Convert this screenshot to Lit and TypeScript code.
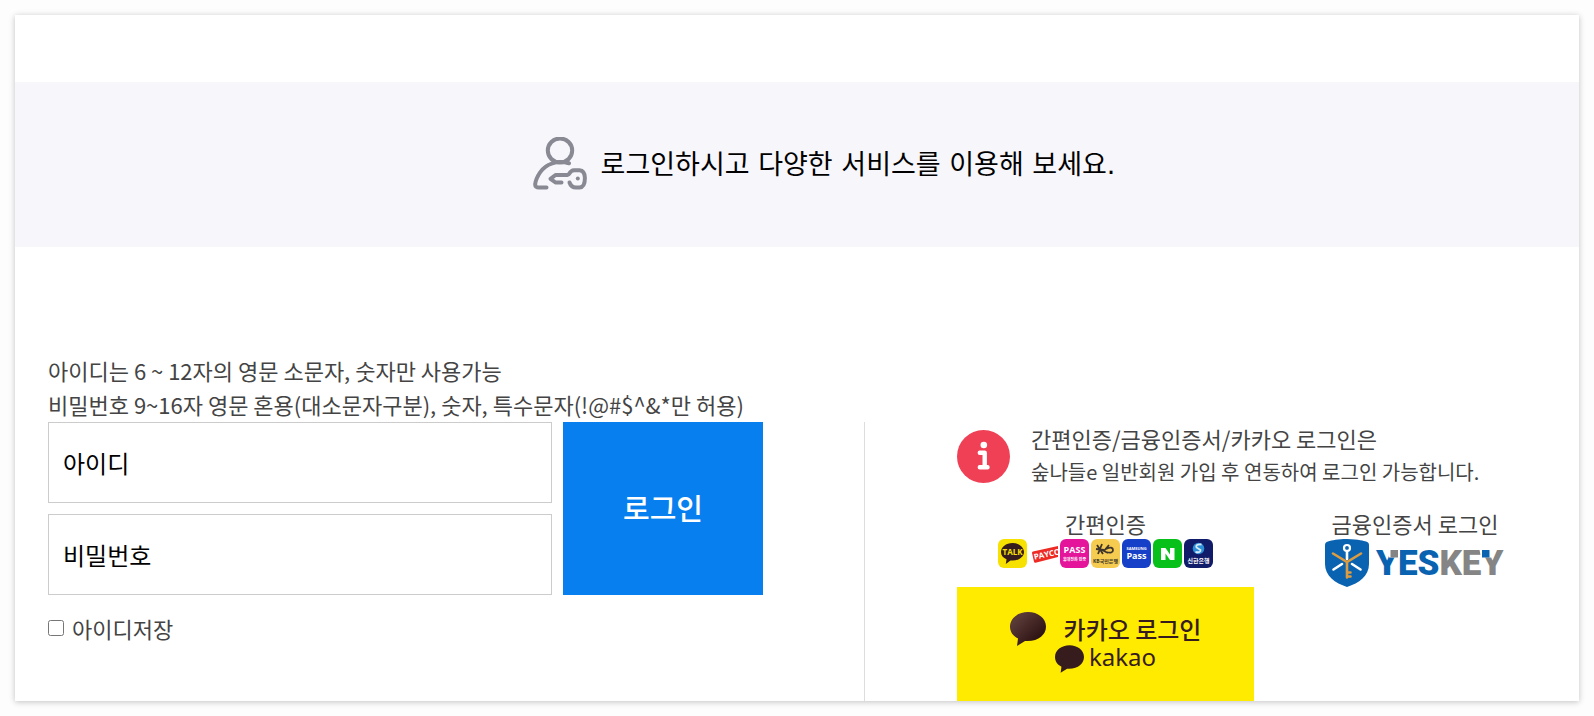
import { LitElement, html, css, svg } from "lit";
import { customElement } from "lit/decorators.js";

const memberIcon = html`<svg class="member" viewBox="0 2 54 54" width="54" height="54" aria-hidden="true" fill="none" stroke="#888993" stroke-width="4" stroke-linecap="round" stroke-linejoin="round">
  <ellipse cx="27" cy="15.500" rx="12.200" ry="12"/>
  <path d="M36 28.300C24 25 13 28.500 7 37.500C4 42 2.500 46.500 2.200 49C2 51.500 3.500 52.500 6 52.500H13.500"/>
  <path d="M28.500 47.500H22.500L17.500 43.800L22.500 40H34.500C37 40 36 35.500 41 35.200H46.500C50.500 35.500 51.800 38.500 51.900 43C51.900 48 51 52.300 46.500 52.500H43C39.500 52.500 37.500 50.500 36.500 47.500"/>
  <circle cx="44.800" cy="43.500" r="2" fill="#888993" stroke="none"/>
</svg>`;

const infoIcon = html`<svg class="info-icon" viewBox="0 0 53 53" width="53" height="53" aria-hidden="true">
  <circle cx="26.500" cy="26.500" r="26.500" fill="#ef4056"/>
  <circle cx="26.800" cy="15" r="3.300" fill="#fff"/>
  <path d="M22.800 22.800H27.700V37.200M22.800 37.200H30.500" fill="none" stroke="#fff" stroke-width="4.400" stroke-linecap="round" stroke-linejoin="round"/>
</svg>`;

const tile = (fill: string, content: unknown) => html`<svg viewBox="0 0 29 29" width="29" height="29" aria-hidden="true">
  ${svg`<rect width="29" height="29" rx="6" fill=${fill}/>`}${content}
</svg>`;

const providers = [
  tile("#f7e100", svg`<path d="M14.500 4C8 4 3 8 3 13C3 16.500 5.200 19 8.500 20.200L7.800 25L12.500 21.500C20.500 22.300 26 18 26 13C26 8 21 4 14.500 4Z" fill="#371c1d"/><text class="mark" x="14.500" y="16" font-size="8" fill="#f7e100">TALK</text>`),
  html`<svg viewBox="0 0 29 29" width="29" height="29" aria-hidden="true"><path d="M4 12.500L29 7V18L6.500 23.800Q5.300 24 5 22.800L3 14Q2.900 12.800 4 12.500Z" fill="#ee2a24"/><text class="mark" x="18" y="18" font-size="8" fill="#fff" transform="rotate(-12 18 15)">PAYCO</text></svg>`,
  tile("#e4159b", svg`<text class="mark" x="14.500" y="14" font-size="9" fill="#fff">PASS</text><text class="mark" x="14.500" y="22" font-size="4" fill="#fff">휴대전화 인증</text>`),
  tile("#f5cb50", svg`<path d="M5 10L13 11M11 5L7 15M6 6L12 15M18 6L13 12L17 14M15 10Q22 7 22 11Q22 15 15 13" fill="none" stroke="#40352a" stroke-width="1.800"/><text class="mark" x="14.500" y="24" font-size="5" fill="#40352a">KB국민은행</text>`),
  tile("#1740c8", svg`<text class="mark" x="14.500" y="11" font-size="4" fill="#fff">SAMSUNG</text><text class="mark" x="14.500" y="20" font-size="9" fill="#fff">Pass</text>`),
  tile("#08c01a", svg`<path d="M8 9H12.500L17 15.500V9H21.500V21H17L12.500 14.500V21H8Z" fill="#fff"/>`),
  tile("#101b69", svg`<circle cx="14.500" cy="9.500" r="5.800" fill="#2d8ed8"/><path d="M17.500 5.500Q11 5 12.500 8.500L16.500 11Q17 14 11.500 13" fill="none" stroke="#d7ecf8" stroke-width="1.800"/><text class="mark" x="14.500" y="24" font-size="6" fill="#fff">신한은행</text>`),
];

const yeskeyLogo = html`<svg viewBox="0 0 180 48" width="180" height="48" role="img" aria-label="YESKEY">
  <path d="M22 0C34 .3 39 2 41 2.500Q44 3.300 44 6V25C44 37 34 44 22 48C10 44 0 37 0 25V6Q0 3.300 3 2.500C7 1.200 13 .2 22 0Z" fill="#0a63b0"/>
  <path d="M22 12V20M8.500 30.500L17 25M35.500 30.500L27 25" stroke="#fff" stroke-width="2.600" stroke-linecap="round"/>
  <circle cx="22" cy="9" r="3" fill="none" stroke="#fff" stroke-width="2.200"/>
  <path d="M8 14.500L22 23L36 14.500M22 23V38.500M23 33.500H25.500M23 37.500H25.500" fill="none" stroke="#dd9c40" stroke-width="2.600" stroke-linecap="round"/>
  <text class="wordmark" x="51" y="36"><tspan fill="#0a63b0">YES</tspan><tspan fill="#858585">KEY</tspan></text>
  <path d="M64 8H75V18.500H64Z" fill="#fff"/><path d="M65.500 11H73V18.500H65.500Z" fill="#858585"/>
  <path d="M154 8H165.500L167 18.500H156Z" fill="#fff"/><path d="M157 11H164.500V18.500H157Z" fill="#0a63b0"/>
</svg>`;

const bubblePath = "M18 0C8 0 0 6.300 0 14.500C0 20 3 24 8 26.500L7 34L15 29C28 30 36 23 36 14.500C36 6.300 28 0 18 0Z";

@customElement("app-root")
export class AppRoot extends LitElement {
  static styles = css`
    :host {
      display: block;
      padding: 15px;
      background: #fdfdfd;
      color: #444;
      font: 22px/34px "Noto Sans CJK KR", sans-serif;
    }
    * { box-sizing: border-box; }
    svg { display: block; flex: none; }
    p { margin: 0; }
    a { color: inherit; text-decoration: none; }
    button, input { font-family: inherit; }
    .card {
      padding-top: 67px;
      background: #fff;
      box-shadow: 0 1px 6px rgba(0, 0, 0, 0.24);
    }
    .banner {
      display: flex;
      align-items: center;
      justify-content: center;
      gap: 14px;
      min-height: 165px;
      padding-left: 54px;
      background: #f6f6fb;
      color: #000;
    }
    .member { margin-bottom: 2px; }
    .banner h1 {
      margin: 0;
      font: 400 27px/40px "DejaVu Sans", "Noto Sans CJK KR", sans-serif;
    }
    .hints { padding: 106px 33px 1px; }
    .columns {
      display: grid;
      grid-template-columns: 849fr 715fr;
    }
    .account { padding: 0 101px 0 33px; }
    .fields {
      display: grid;
      grid-template-columns: 1fr 200px;
      gap: 11px;
    }
    .field {
      width: 100%;
      height: 81px;
      padding: 0 14px;
      border: 1px solid #ccc;
      border-radius: 0;
      background: #fff;
      font-size: 24px;
    }
    .field::placeholder { color: #000; opacity: 1; }
    .submit {
      grid-column: 2;
      grid-row: 1 / 3;
      padding: 0 0 4px;
      border: 0;
      background: #087fef;
      color: #fff;
      font-size: 29px;
      font-weight: 500;
    }
    .remember {
      display: flex;
      align-items: center;
      gap: 8px;
      margin-top: 16px;
    }
    .remember input { width: 16px; height: 16px; margin: 0; }
    .partners {
      padding: 0 25px 0 92px;
      border-left: 1px solid #ddd;
    }
    .notice {
      display: flex;
      gap: 21px;
      padding-bottom: 21px;
      line-height: 32px;
    }
    .info-icon { margin-top: 8px; }
    .small { font-size: 20px; line-height: 36px; }
    .options {
      display: grid;
      grid-template-columns: 297fr 278fr;
      column-gap: 22px;
    }
    .option {
      display: flex;
      flex-direction: column;
      align-items: center;
      gap: 4px;
      line-height: 24px;
    }
    .providers { display: flex; gap: 2px; }
    .mark {
      font-family: "Open Sans", "Noto Sans CJK KR", sans-serif;
      font-weight: 700;
      text-anchor: middle;
    }
    .wordmark { font: 900 35px Roboto, sans-serif; }
    .kakao {
      display: flex;
      flex-direction: column;
      align-items: center;
      min-height: 114px;
      padding-top: 25px;
      background: #ffeb00;
      color: #371c1d;
      font-size: 24px;
      font-weight: 500;
    }
    .kakao-row { display: flex; gap: 18px; height: 33px; line-height: 33px; }
    .kakao-brand {
      display: flex;
      gap: 5px;
      font: 24px/24px "Noto Sans", sans-serif;
    }
  `;

  render() {
    return html`
      <main class="card">
        <header class="banner">
          ${memberIcon}
          <h1>로그인하시고 다양한 서비스를 이용해 보세요.</h1>
        </header>
        <div class="hints">
          <p>아이디는 6 ~ 12자의 영문 소문자, 숫자만 사용가능</p>
          <p>비밀번호 9~16자 영문 혼용(대소문자구분), 숫자, 특수문자(!@#$^&amp;*만 허용)</p>
        </div>
        <div class="columns">
          <form class="account" @submit=${(e: Event) => e.preventDefault()}>
            <div class="fields">
              <input class="field" type="text" placeholder="아이디" aria-label="아이디" />
              <button class="submit" type="submit">로그인</button>
              <input class="field" type="password" placeholder="비밀번호" aria-label="비밀번호" />
            </div>
            <label class="remember"><input type="checkbox" />아이디저장</label>
          </form>
          <section class="partners">
            <div class="notice">
              ${infoIcon}
              <div>
                <p>간편인증/금융인증서/카카오 로그인은</p>
                <p class="small">숲나들e 일반회원 가입 후 연동하여 로그인 가능합니다.</p>
              </div>
            </div>
            <div class="options">
              <a class="option" href="#simple">간편인증<span class="providers">${providers}</span></a>
              <a class="option" href="#yeskey">금융인증서 로그인${yeskeyLogo}</a>
              <a class="kakao" href="#kakao">
                <span class="kakao-row">
                  <svg viewBox="0 0 36 34" width="36" height="34" aria-hidden="true">
                    <defs><linearGradient id="bubble" x2="1" y2="1"><stop offset=".2" stop-color="#593a37"/><stop offset=".8" stop-color="#2c1212"/></linearGradient></defs>
                    <path d=${bubblePath} fill="url(#bubble)"/>
                  </svg>
                  카카오 로그인
                </span>
                <span class="kakao-brand">
                  <svg viewBox="0 0 36 34" width="29" height="28" aria-hidden="true"><path d=${bubblePath} fill="#371c1d"/></svg>
                  kakao
                </span>
              </a>
            </div>
          </section>
        </div>
      </main>
    `;
  }
}
